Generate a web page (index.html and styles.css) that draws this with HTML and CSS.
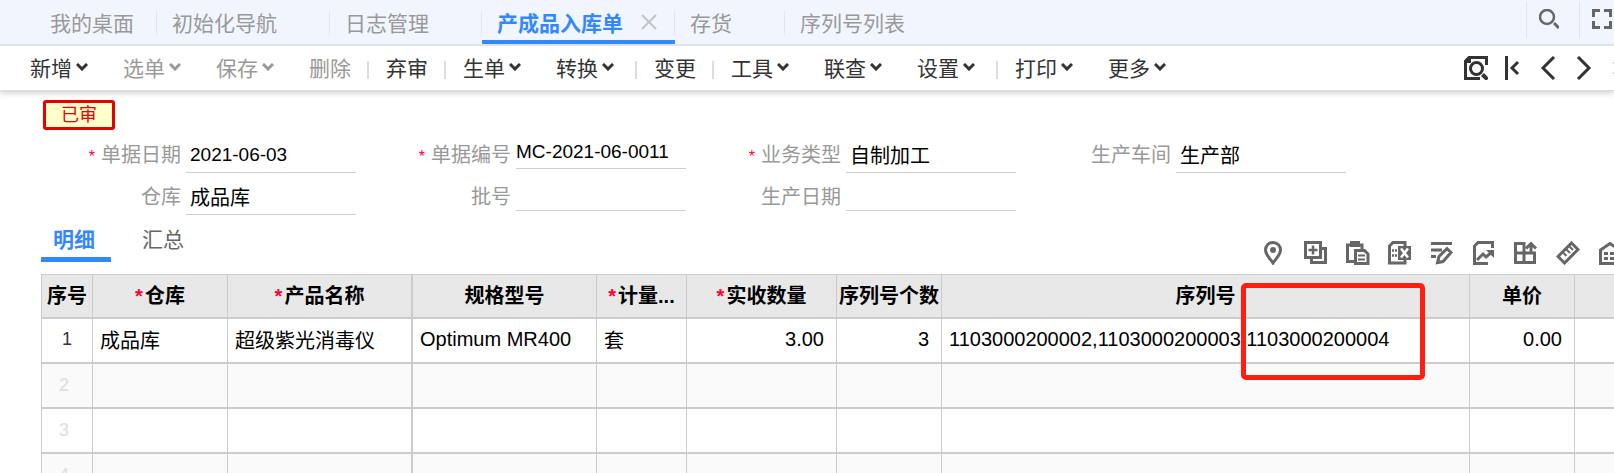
FILE: index.html
```html
<!DOCTYPE html>
<html lang="zh-CN">
<head>
<meta charset="UTF-8">
<meta name="viewport" content="width=device-width, initial-scale=1.0">
<title>产成品入库单</title>
<link rel="stylesheet" href="styles.css">
</head>
<body>

<!-- Shared shapes -->
<svg width="0" height="0" class="defs" aria-hidden="true">
    <symbol id="chevron" viewBox="0 0 12 8">
        <path d="M1 1l5 5 5-5" fill="none" stroke="currentColor" stroke-width="3"/>
    </symbol>
</svg>

<nav class="tabs">
    <button type="button" class="tab tab-home">我的桌面</button>
    <button type="button" class="tab">初始化导航</button>
    <button type="button" class="tab">日志管理</button>
    <button type="button" class="tab active">产成品入库单<svg class="close" viewBox="0 0 16 16"><path d="M1 1l14 14M15 1L1 15" fill="none" stroke="#c0c4cc" stroke-width="2"/></svg></button>
    <button type="button" class="tab">存货</button>
    <button type="button" class="tab tab-last">序列号列表</button>
    <div class="tab-tools">
        <button type="button" class="tab-tool" aria-label="搜索">
            <svg viewBox="0 0 20 20"><circle cx="8" cy="8" r="7" fill="none" stroke="#666" stroke-width="2.500"/><path d="M15 14l5 5" stroke="#666" stroke-width="3"/></svg>
        </button>
        <button type="button" class="tab-tool" aria-label="全屏">
            <svg viewBox="0 0 20 20"><path d="M1.500 8V1.500H8M12 1.500h6.500V8M18.500 12v6.500H12M8 18.500H1.500V12" fill="none" stroke="#666" stroke-width="3"/></svg>
        </button>
    </div>
</nav>

<div class="toolbar">
    <button type="button" class="tool">新增<svg class="arrow"><use href="#chevron"/></svg></button>
    <button type="button" class="tool" disabled>选单<svg class="arrow"><use href="#chevron"/></svg></button>
    <button type="button" class="tool" disabled>保存<svg class="arrow"><use href="#chevron"/></svg></button>
    <button type="button" class="tool" disabled>删除</button>
    <span class="sep"></span>
    <button type="button" class="tool">弃审</button>
    <span class="sep"></span>
    <button type="button" class="tool">生单<svg class="arrow"><use href="#chevron"/></svg></button>
    <button type="button" class="tool">转换<svg class="arrow"><use href="#chevron"/></svg></button>
    <span class="sep"></span>
    <button type="button" class="tool">变更</button>
    <span class="sep"></span>
    <button type="button" class="tool">工具<svg class="arrow"><use href="#chevron"/></svg></button>
    <button type="button" class="tool">联查<svg class="arrow"><use href="#chevron"/></svg></button>
    <button type="button" class="tool">设置<svg class="arrow"><use href="#chevron"/></svg></button>
    <span class="sep"></span>
    <button type="button" class="tool">打印<svg class="arrow"><use href="#chevron"/></svg></button>
    <button type="button" class="tool">更多<svg class="arrow"><use href="#chevron"/></svg></button>
    <div class="pager">
        <button type="button" class="page-btn" aria-label="预览">
            <svg viewBox="0 0 24 24" fill="none" stroke="#333"><path d="M22.500 9V1.500H5L1.500 5v17.500H16" stroke-width="3"/><path d="M2 5.500h3.500V2" stroke-width="3"/><circle cx="12.500" cy="12.500" r="6" stroke-width="3"/><path d="M18.500 18.500l5 5" stroke-width="4"/></svg>
        </button>
        <button type="button" class="page-btn" aria-label="第一张">
            <svg viewBox="0 0 24 24" fill="none" stroke="#333"><path d="M6.500 0v24" stroke-width="3"/><path d="M18 6l-6 6 6 6" stroke-width="3"/></svg>
        </button>
        <button type="button" class="page-btn" aria-label="上一张">
            <svg viewBox="0 0 24 24" fill="none" stroke="#333"><path d="M18 1L7 12l11 11" stroke-width="3"/></svg>
        </button>
        <button type="button" class="page-btn" aria-label="下一张">
            <svg viewBox="0 0 24 24" fill="none" stroke="#333"><path d="M6 1l11 11L6 23" stroke-width="3"/></svg>
        </button>
        <button type="button" class="page-btn" aria-label="最后一张">
            <svg viewBox="0 0 24 24" fill="none" stroke="#999"><path d="M6 6l6 6-6 6M17.500 0v24" stroke-width="3"/></svg>
        </button>
    </div>
</div>

<div class="badge">已审</div>

<form class="form">
    <div class="field">
        <label for="date"><span class="star">*</span>单据日期</label>
        <input type="text" id="date" class="picker latin" value="2021-06-03">
    </div>
    <div class="field">
        <label for="code"><span class="star">*</span>单据编号</label>
        <input type="text" id="code" class="latin" value="MC-2021-06-0011">
    </div>
    <div class="field">
        <label for="type"><span class="star">*</span>业务类型</label>
        <input type="text" id="type" class="picker" value="自制加工">
    </div>
    <div class="field">
        <label for="workshop">生产车间</label>
        <input type="text" id="workshop" class="picker" value="生产部">
    </div>
    <div class="field">
        <label for="warehouse">仓库</label>
        <input type="text" id="warehouse" class="picker" value="成品库">
    </div>
    <div class="field">
        <label for="batch">批号</label>
        <input type="text" id="batch">
    </div>
    <div class="field">
        <label for="made">生产日期</label>
        <input type="text" id="made">
    </div>
</form>

<div class="detail-bar">
    <button type="button" class="subtab active">明细</button>
    <button type="button" class="subtab">汇总</button>
    <div class="grid-tools">
        <button type="button" class="grid-tool" aria-label="定位">
            <svg viewBox="0 0 24 24"><path d="M11 1.500c-4.500 0-7.500 3.500-7.500 7.500 0 5 5 9 7.500 13 2.500-4 7.500-8 7.500-13 0-4-3-7.500-7.500-7.500z" fill="none" stroke="#666" stroke-width="3"/><circle cx="11" cy="9" r="3" fill="#666"/></svg>
        </button>
        <button type="button" class="grid-tool" aria-label="增行">
            <svg viewBox="0 0 24 24" fill="none" stroke="#666" stroke-width="3"><path d="M1.500 1.500h15v15h-15z"/><path d="M9 4.500v9M4.500 9h9" stroke-width="2.500"/><path d="M18 7.500h3.500v14h-14V18"/></svg>
        </button>
        <button type="button" class="grid-tool" aria-label="粘贴">
            <svg viewBox="0 0 24 24" fill="none" stroke="#666" stroke-width="3"><path d="M8 20.500H1.500V4H16v4"/><path d="M4 0h10v6H4z" fill="#666" stroke="none"/><path d="M9.500 9.500h9l3.500 3.500v9.500H9.500z"/><path d="M12 14.500h7M12 18.500h7" stroke-width="2"/></svg>
        </button>
        <button type="button" class="grid-tool" aria-label="导出">
            <svg viewBox="0 0 24 24" fill="none" stroke="#666" stroke-width="3"><path d="M17 5V1.500H5L1.500 5v17H17v-3"/><path d="M4 9.500h5M4 14.500h5" stroke-width="2.500" stroke-dasharray="2 1"/><path d="M10 5h13v14H10z" fill="#666" stroke="none"/><path d="M13 7.500l7 9M20 7.500l-7 9" stroke="#fff" stroke-width="2.500"/></svg>
        </button>
        <button type="button" class="grid-tool" aria-label="批改">
            <svg viewBox="0 0 24 24" fill="none" stroke="#666" stroke-width="3"><path d="M1 2.500h21M1 9h11M1 15.500h5"/><path d="M7.500 21.500l1.500-6 8-8 4 4-8 9z"/></svg>
        </button>
        <button type="button" class="grid-tool" aria-label="图表">
            <svg viewBox="0 0 24 24" fill="none" stroke="#666" stroke-width="3"><path d="M20.500 7V1.500H6L2.500 5v17.500H16"/><path d="M5 19l6-6 3 3 6-5"/><path d="M14 9h8v8z" fill="#666" stroke="none"/></svg>
        </button>
        <button type="button" class="grid-tool" aria-label="列设置">
            <svg viewBox="0 0 24 24" fill="none" stroke="#666" stroke-width="3"><path d="M1.500 2.500H10v19H1.500zM1.500 12h19v9.500H10"/><path d="M17 12V3M12 7.500l5-5 5 5"/></svg>
        </button>
        <button type="button" class="grid-tool" aria-label="尺寸">
            <svg viewBox="0 0 24 24" fill="none" stroke="#666" stroke-width="3"><path d="M2 15.500L15.500 2 22 8.500 8.500 22z"/><path d="M7 11.500l3.500 3.500M10.500 8.500L14 12M13.500 5.500L17 9" stroke-width="2"/></svg>
        </button>
        <button type="button" class="grid-tool" aria-label="仓库">
            <svg viewBox="0 0 24 24" fill="none" stroke="#666" stroke-width="3"><path d="M2.500 22.500V9L12 2.500 21.500 9v13.500z"/><path d="M6 12.500h12M6 17.500h12" stroke-dasharray="4 2"/></svg>
        </button>
    </div>
</div>

<div class="grid">
    <table>
        <colgroup>
            <col class="c-no">
            <col class="c-store">
            <col class="c-name">
            <col class="c-spec">
            <col class="c-unit">
            <col class="c-qty">
            <col class="c-price">
            <col>
            <col class="c-price">
            <col class="c-price">
        </colgroup>
        <thead>
            <tr>
                <th>序号</th>
                <th><span class="star">*</span>仓库</th>
                <th class="frozen"><span class="star">*</span>产品名称</th>
                <th>规格型号</th>
                <th><span class="star">*</span>计量...</th>
                <th><span class="star">*</span>实收数量</th>
                <th>序列号个数</th>
                <th>序列号</th>
                <th>单价</th>
                <th></th>
            </tr>
        </thead>
        <tbody>
            <tr>
                <td class="no filled">1</td>
                <td>成品库</td>
                <td class="frozen">超级紫光消毒仪</td>
                <td>Optimum MR400</td>
                <td>套</td>
                <td class="num">3.00</td>
                <td class="num">3</td>
                <td class="serial">1103000200002,1103000200003,1103000200004<span class="mark"></span></td>
                <td class="num">0.00</td>
                <td></td>
            </tr>
            <tr><td class="no">2</td><td></td><td class="frozen"></td><td></td><td></td><td></td><td></td><td></td><td></td><td></td></tr>
            <tr><td class="no">3</td><td></td><td class="frozen"></td><td></td><td></td><td></td><td></td><td></td><td></td><td></td></tr>
            <tr><td class="no">4</td><td></td><td class="frozen"></td><td></td><td></td><td></td><td></td><td></td><td></td><td></td></tr>
        </tbody>
    </table>
</div>

</body>
</html>
```
FILE: styles.css
```css
* {
    box-sizing: border-box;
}
html {
    overflow: hidden;
}
body {
    margin: 0;
    background-color: #fff;
    color: #000;
    font-family: "Liberation Sans", "Noto Sans CJK SC", sans-serif;
    font-size: 20px;
    overflow: hidden;
}
button, input {
    font-family: inherit;
    margin: 0;
    padding: 0;
    border: none;
    border-radius: 0;
    background: none;
}
button {
    cursor: pointer;
    white-space: nowrap;
}
.defs {
    position: absolute;
}

/* Page tabs */
.tabs {
    display: flex;
    height: 46px;
    background-color: #f1f6fe;
    border-bottom: 2px solid #e6eaf4;
}
.tab {
    position: relative;
    flex: none;
    display: flex;
    align-items: center;
    height: 44px;
    padding: 0 53px 0 15px;
    font-size: 21px;
    color: #999;
}
.tab::after {
    content: "";
    position: absolute;
    right: 0;
    top: 11px;
    width: 1px;
    height: 24px;
    background-color: #dfe4ee;
}
.tab-home {
    padding-left: 50px;
    padding-right: 23px;
}
.tab-last::after {
    display: none;
}
.tab.active {
    padding-top: 4px;
    padding-right: 18px;
    color: #3388ff;
    font-weight: bold;
    border-bottom: 4px solid #3388ff;
}
.close {
    width: 16px;
    height: 16px;
    margin-left: 18px;
}
.tab-tools {
    display: flex;
    margin-left: auto;
    padding-top: 2px;
}
.tab-tool {
    display: flex;
    align-items: center;
    height: 36px;
    padding: 0 20px 2px 12px;
    border-left: 1px solid #dfe4ee;
}
.tab-tool:last-child {
    padding-right: 2px;
}
.tab-tool svg {
    width: 20px;
    height: 20px;
}

/* Toolbar */
.toolbar {
    display: flex;
    align-items: center;
    height: 45px;
    padding-left: 15px;
    border-bottom: 1px solid #ddd;
    box-shadow: 0 2px 6px rgba(0, 0, 0, 0.2);
}
.tool {
    flex: none;
    display: flex;
    align-items: center;
    height: 44px;
    padding: 0 15px 2px;
    font-size: 21px;
    color: #333;
}
.tool:disabled {
    color: #999;
}
.arrow {
    width: 12px;
    height: 8px;
    margin: 0 5px 0 4px;
    overflow: visible;
}
.sep {
    flex: none;
    width: 2px;
    height: 18px;
    margin: 4px 2px 0 1px;
    background-color: #ddd;
}
.pager {
    display: flex;
    gap: 12px;
    margin-left: auto;
    margin-right: -18px;
}
.page-btn {
    display: flex;
}
.page-btn svg {
    width: 24px;
    height: 24px;
}

.badge {
    width: 72px;
    height: 30px;
    margin: 9px 0 0 43px;
    border: 3px solid #e60000;
    border-radius: 3px;
    background-color: #ffffcc;
    color: #e60000;
    font-size: 18px;
    line-height: 24px;
    text-align: center;
}

/* Bill header */
.form {
    display: grid;
    grid-template-columns: repeat(4, 330px);
    grid-auto-rows: 42px;
    margin: 4px 0 0 26px;
}
.field {
    display: flex;
    align-items: flex-start;
    gap: 5px;
}
.field label {
    width: 155px;
    line-height: 42px;
    text-align: right;
    color: #999;
}
.field input {
    width: 170px;
    height: 35px;
    padding: 2px 0 0;
    border-bottom: 1px solid #d0d0d0;
    font-size: 20px;
    color: #000;
}
.field .picker {
    height: 39px;
    padding: 3px 4px 0;
}
.field .latin {
    font-size: 19px;
}
.star {
    color: #ff0033;
    margin-right: 2px;
}
.field .star {
    font-size: 16px;
    margin-right: 6px;
}

/* Detail tabs and grid buttons */
.detail-bar {
    display: flex;
    height: 44px;
    margin-left: 41px;
    gap: 19px;
}
.subtab {
    height: 44px;
    padding: 0 16px 0 12px;
    font-size: 21px;
    color: #666;
    border-bottom: 5px solid transparent;
}
.subtab.active {
    color: #3388ff;
    font-weight: bold;
    border-bottom-color: #3388ff;
}
.grid-tools {
    display: flex;
    align-items: flex-start;
    gap: 18px;
    margin-left: auto;
    margin-right: -8px;
    padding-top: 23px;
}
.grid-tool {
    display: flex;
}
.grid-tool svg {
    width: 24px;
    height: 24px;
}

/* Detail grid, last column runs off the window */
.grid {
    margin: 12px -66px 0 41px;
}
table {
    width: 100%;
    table-layout: fixed;
    border-collapse: separate;
    border-spacing: 0;
    border: solid #ccc;
    border-width: 1px 0 0 1px;
}
.c-no { width: 51px; }
.c-store { width: 135px; }
.c-name { width: 185px; }
.c-spec { width: 184px; }
.c-unit { width: 90px; }
.c-qty { width: 150px; }
.c-price { width: 105px; }
th, td {
    height: 45px;
    padding: 0 0 2px 7px;
    border: solid #ccc;
    border-width: 0 1px 2px 0;
    white-space: nowrap;
    text-align: left;
}
th {
    height: 44px;
    padding: 0 0 4px;
    background-color: #e8e8e8;
    text-align: center;
}
.frozen {
    border-right-width: 2px;
}
tbody tr:nth-child(even) {
    background-color: #fafafa;
}
.num {
    padding: 0 12px 2px 0;
    text-align: right;
}
.no {
    padding: 0 6px 0 0;
    font-size: 18px;
    color: #ddd;
    text-align: center;
}
.no.filled {
    padding: 0 0 2px;
    color: #333;
}
.serial {
    position: relative;
}
/* Highlight round the last serial number */
.mark {
    position: absolute;
    left: 299px;
    top: -36px;
    width: 184px;
    height: 97px;
    border: 5px solid #ff1e10;
    border-radius: 5px;
    pointer-events: none;
}
```
